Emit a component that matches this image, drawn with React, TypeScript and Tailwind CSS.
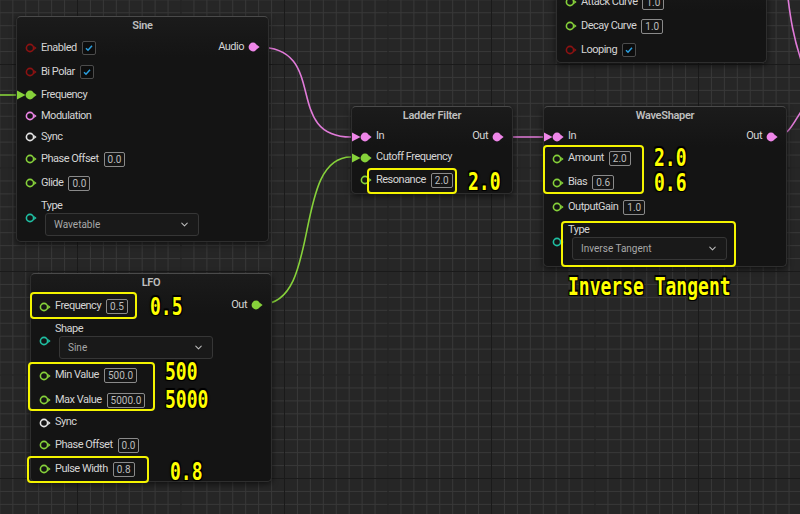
import { ChevronDown } from "lucide-react";
import type { ReactNode } from "react";

type PinKind = "bool" | "float" | "audio" | "trigger" | "enum";

const pinColor: Record<PinKind, string> = {
  bool: "#8c1212",
  float: "#86d13a",
  audio: "#ee86e8",
  trigger: "#e4e4e4",
  enum: "#1fbfa2",
};

function InPin({ kind, linked }: { kind: PinKind; linked?: boolean }) {
  const c = pinColor[kind];
  return (
    <svg width="21" height="12" viewBox="0 0 21 12" className="shrink-0">
      {linked ? (
        <>
          <polygon points="0,1.5 8.5,6 0,10.5" fill={c} />
          <circle cx="13" cy="6" r="4.4" fill={c} />
          <polygon points="17,4 19.6,6 17,8" fill={c} />
        </>
      ) : (
        <>
          <circle cx="13" cy="6" r="3.6" fill="none" stroke={c} strokeWidth="1.6" />
          <polygon points="17.2,4 19.6,6 17.2,8" fill={c} />
        </>
      )}
    </svg>
  );
}

function OutPin({ kind }: { kind: PinKind }) {
  const c = pinColor[kind];
  return (
    <svg width="14" height="12" viewBox="0 0 14 12" className="ml-[3px] shrink-0">
      <circle cx="6" cy="6" r="4.4" fill={c} />
      <polygon points="10,4 12.6,6 10,8" fill={c} />
    </svg>
  );
}

function Value({ v }: { v: string }) {
  return (
    <span className="ml-[5px] flex h-[15px] items-center rounded-[2px] border border-[#8a8a8a] px-[3px] text-[10px] text-[#bcbcbc]">
      {v}
    </span>
  );
}

function Check() {
  return (
    <span className="ml-[5px] flex h-[14px] w-[14px] items-center justify-center rounded-[2px] border border-[#4c4c4c] bg-[#0d0d0d]">
      <svg width="8" height="8" viewBox="0 0 8 8">
        <path d="M1 4.2 L3 6.2 L7 1.8" fill="none" stroke="#2a9fe0" strokeWidth="1.5" />
      </svg>
    </span>
  );
}

function Row({
  h,
  kind,
  linked,
  label,
  children,
}: {
  h: string;
  kind: PinKind;
  linked?: boolean;
  label: string;
  children?: ReactNode;
}) {
  return (
    <div className={`flex items-center ${h}`}>
      <InPin kind={kind} linked={linked} />
      <span className="ml-[3px] text-[11px] tracking-[-0.5px] text-[#d4d4d4]">{label}</span>
      {children}
    </div>
  );
}

function OutRow({ h, label, kind }: { h: string; label: string; kind: PinKind }) {
  return (
    <div className={`flex items-center justify-end pr-[7px] ${h}`}>
      <span className="text-[11px] tracking-[-0.5px] text-[#d4d4d4]">{label}</span>
      <OutPin kind={kind} />
    </div>
  );
}

function EnumRow({ pad, label, value, w }: { pad: string; label: string; value: string; w: string }) {
  return (
    <div className={`flex items-center ${pad}`}>
      <InPin kind="enum" />
      <div className="ml-[3px] flex flex-col">
        <span className="h-[14px] text-[11px] leading-[14px] tracking-[-0.5px] text-[#d4d4d4]">{label}</span>
        <div
          className={`ml-[4px] flex h-[23px] items-center justify-between rounded-[3px] border border-[#363636] bg-[#191919] pl-[8px] pr-[8px] text-[10px] text-[#a8a8a8] ${w}`}
        >
          <span>{value}</span>
          <ChevronDown size={11} strokeWidth={2.2} color="#bdbdbd" />
        </div>
      </div>
    </div>
  );
}

function Node({ pos, title, children }: { pos: string; title?: string; children: ReactNode }) {
  return (
    <div
      className={`absolute flex flex-col rounded-[5px] border border-[#2e2e2e] border-t-[#4a4a4a] bg-[linear-gradient(#1b1b1b,#141414_40px)] shadow-[0_2px_6px_rgba(0,0,0,0.6)] ${pos}`}
    >
      {title && (
        <div className="flex h-[19px] items-center justify-center text-[11px] font-semibold tracking-[-0.3px] text-[#bfbfbf]">
          {title}
        </div>
      )}
      {children}
    </div>
  );
}

function Note({ pos, text }: { pos: string; text: string }) {
  return (
    <div
      className={`absolute origin-top scale-y-[1.35] whitespace-pre font-['DejaVu_Sans_Mono',monospace] text-[18px] font-bold leading-[14px] text-[#ffff00] [text-shadow:-1px_-1px_0_#000,1px_-1px_0_#000,-1px_1px_0_#000,1px_1px_0_#000,0_0_2px_#000] ${pos}`}
    >
      {text}
    </div>
  );
}

function Mark({ pos }: { pos: string }) {
  return <div className={`absolute rounded-[4px] border-2 border-[#f4f400] ${pos}`} />;
}

export default function App() {
  return (
    <div className="relative h-[514px] w-[800px] overflow-hidden bg-[#262626] font-[Roboto,sans-serif] [background-image:linear-gradient(#1a1a1a_1px,transparent_1px),linear-gradient(90deg,#1a1a1a_1px,transparent_1px),linear-gradient(#383838_1px,transparent_1px),linear-gradient(90deg,#383838_1px,transparent_1px)] [background-position:77px_64px] [background-size:103.5px_103.5px,103.5px_103.5px,12.9375px_12.9375px,12.9375px_12.9375px]">
      <svg className="pointer-events-none absolute inset-0" width="800" height="514" fill="none">
        <path d="M0 95 L18 95" stroke="#86d13a" strokeWidth="1.6" />
        <path d="M258 47 C330 47 282 137 351 137" stroke="#e07ad8" strokeWidth="1.6" />
        <path d="M262 304 C322 304 292 157 351 157" stroke="#86d13a" strokeWidth="1.6" />
        <path d="M503 137 L545 137" stroke="#e07ad8" strokeWidth="1.6" />
        <path d="M775 136 C790 136 792 124 806 104" stroke="#e07ad8" strokeWidth="1.6" />
        <path d="M786 -20 C790 20 794 40 803 66" stroke="#e07ad8" strokeWidth="1.6" />
      </svg>

      <Node pos="left-[556px] top-[-30px] h-[93px] w-[211px]">
        <div className="h-[19px]" />
        <Row h="h-[24px]" kind="float" label="Attack Curve">
          <Value v="1.0" />
        </Row>
        <Row h="h-[24px]" kind="float" label="Decay Curve">
          <Value v="1.0" />
        </Row>
        <Row h="h-[24px]" kind="bool" label="Looping">
          <Check />
        </Row>
      </Node>

      <Node pos="left-[16px] top-[16px] h-[226px] w-[253px]" title="Sine">
        <div className="flex">
          <div className="flex flex-1 flex-col">
            <Row h="h-[24px]" kind="bool" label="Enabled">
              <Check />
            </Row>
            <Row h="h-[24px]" kind="bool" label="Bi Polar">
              <Check />
            </Row>
            <Row h="h-[22px]" kind="float" linked label="Frequency" />
            <Row h="h-[20px]" kind="audio" label="Modulation" />
            <Row h="h-[22px]" kind="trigger" label="Sync" />
            <Row h="h-[22px]" kind="float" label="Phase Offset">
              <Value v="0.0" />
            </Row>
            <Row h="h-[26px]" kind="float" label="Glide">
              <Value v="0.0" />
            </Row>
            <EnumRow pad="pt-[3px]" label="Type" value="Wavetable" w="w-[154px]" />
          </div>
          <div className="flex flex-col">
            <OutRow h="h-[22px]" label="Audio" kind="audio" />
          </div>
        </div>
      </Node>

      <Node pos="left-[351px] top-[106px] h-[88px] w-[162px]" title="Ladder Filter">
        <div className="flex">
          <div className="flex flex-1 flex-col">
            <Row h="h-[21px]" kind="audio" linked label="In" />
            <Row h="h-[21px]" kind="float" linked label="Cutoff Frequency" />
            <Row h="h-[24px]" kind="float" label="Resonance">
              <Value v="2.0" />
            </Row>
          </div>
          <div className="absolute right-0 top-[19px] flex flex-col">
            <OutRow h="h-[21px]" label="Out" kind="audio" />
          </div>
        </div>
      </Node>

      <Node pos="left-[543px] top-[106px] h-[161px] w-[244px]" title="WaveShaper">
        <div className="flex">
          <div className="flex flex-1 flex-col">
            <Row h="h-[21px]" kind="audio" linked label="In" />
            <Row h="h-[23px]" kind="float" label="Amount">
              <Value v="2.0" />
            </Row>
            <Row h="h-[25px]" kind="float" label="Bias">
              <Value v="0.6" />
            </Row>
            <Row h="h-[24px]" kind="float" label="OutputGain">
              <Value v="1.0" />
            </Row>
            <EnumRow pad="pt-[4px]" label="Type" value="Inverse Tangent" w="w-[155px]" />
          </div>
          <div className="flex flex-col">
            <OutRow h="h-[21px]" label="Out" kind="audio" />
          </div>
        </div>
      </Node>

      <Node pos="left-[30px] top-[273px] h-[209px] w-[242px]" title="LFO">
        <div className="flex">
          <div className="flex flex-1 flex-col">
            <Row h="h-[27px]" kind="float" label="Frequency">
              <Value v="0.5" />
            </Row>
            <EnumRow pad="pt-[2px] pb-[4px]" label="Shape" value="Sine" w="w-[154px]" />
            <Row h="h-[25px]" kind="float" label="Min Value">
              <Value v="500.0" />
            </Row>
            <Row h="h-[24px]" kind="float" label="Max Value">
              <Value v="5000.0" />
            </Row>
            <Row h="h-[21px]" kind="trigger" label="Sync" />
            <Row h="h-[24px]" kind="float" label="Phase Offset">
              <Value v="0.0" />
            </Row>
            <Row h="h-[24px]" kind="float" label="Pulse Width">
              <Value v="0.8" />
            </Row>
          </div>
          <div className="flex flex-col">
            <OutRow h="h-[24px]" label="Out" kind="float" />
          </div>
        </div>
      </Node>

      <Mark pos="left-[367px] top-[168px] h-[26px] w-[90px]" />
      <Mark pos="left-[543px] top-[145px] h-[49px] w-[101px]" />
      <Mark pos="left-[561px] top-[221px] h-[46px] w-[175px]" />
      <Mark pos="left-[30px] top-[292px] h-[27px] w-[107px]" />
      <Mark pos="left-[28px] top-[362px] h-[49px] w-[127px]" />
      <Mark pos="left-[27px] top-[456px] h-[27px] w-[122px]" />

      <Note pos="left-[468px] top-[172px]" text="2.0" />
      <Note pos="left-[654px] top-[148px]" text="2.0" />
      <Note pos="left-[654px] top-[173px]" text="0.6" />
      <Note pos="left-[568px] top-[277px]" text="Inverse Tangent" />
      <Note pos="left-[150px] top-[297px]" text="0.5" />
      <Note pos="left-[165px] top-[362px]" text="500" />
      <Note pos="left-[165px] top-[390px]" text="5000" />
      <Note pos="left-[170px] top-[462px]" text="0.8" />
    </div>
  );
}
